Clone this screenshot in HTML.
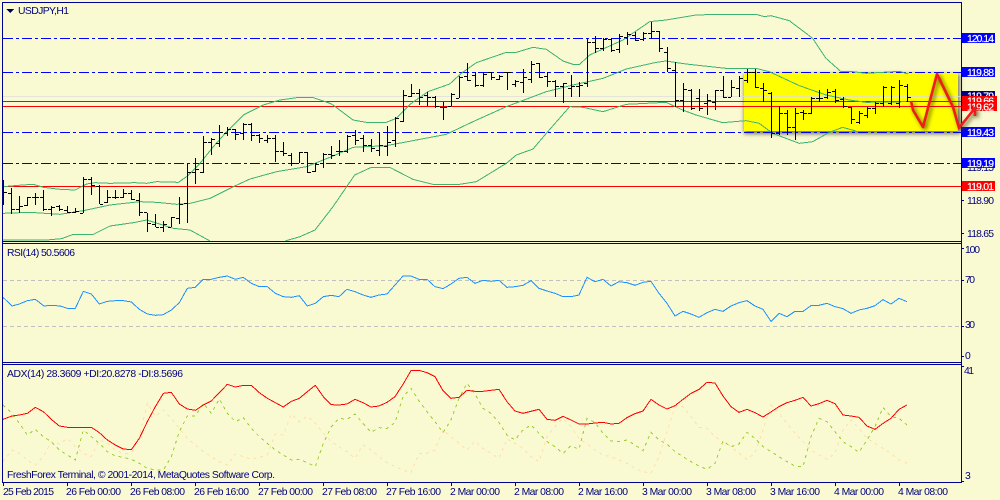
<!DOCTYPE html>
<html><head><meta charset="utf-8"><title>USDJPY,H1</title>
<style>
html,body{margin:0;padding:0;background:#fafad2;width:1000px;height:500px;overflow:hidden}
#y{position:absolute;left:744px;top:73px;width:214px;height:58px;background:#ffff00;box-shadow:1px 2px 4px 1px rgba(0,0,0,.5)}
svg{position:absolute;left:0;top:0}
text{font-family:"Liberation Sans",sans-serif;font-size:10.4px;fill:#000080}
.w{fill:#fff;stroke:#fff;stroke-width:.2px}
.l{fill:none;vector-effect:non-scaling-stroke;stroke-width:1}
</style></head><body>
<div id="y"></div>
<svg width="1000" height="500" viewBox="0 0 1000 500" shape-rendering="crispEdges">
<!-- level lines -->
<g fill="none">
<path d="M3 96.5H961" stroke="#dcdcdc" opacity=".75"/>
<path d="M3 38.5H961M3 72.5H961M3 132.5H961" stroke="#0000ff" stroke-dasharray="10 3 3 3"/>
<path d="M3 163.5H961" stroke="#0000c8" stroke-dasharray="10 3 3 3"/>
<path d="M3 101.5H961M3 106.5H961M3 186.5H961" stroke="#ff0000"/>
</g>
<!-- Bollinger -->
<g transform="scale(.33333)" fill="none" stroke="#3cb371">
<polyline class="l" points="9,560 68,555 100,553 130,562 180,568 225,570 260,552 285,548 330,550 405,548 440,550 470,545 535,547 560,530 600,490 640,440 680,395 730,345 790,315 840,300 890,293 940,293 990,310 999,315 1059,360 1099,367 1159,367 1189,355 1234,310 1284,275 1349,252 1384,220 1429,188 1519,157 1549,157 1599,142 1639,148 1689,183 1719,193 1739,193 1769,165 1869,120 1949,65 1998,60 2088,45 2158,43 2268,43 2293,50 2313,47 2368,62 2438,115 2478,175 2523,215 2558,215 2598,220 2698,214 2725,222"/>
<polyline class="l" points="9,640 90,637 180,643 250,632 330,615 420,605 470,607 530,613 570,610 630,595 700,560 750,537 830,515 920,500 999,468 1059,442 1159,437 1239,422 1339,403 1419,365 1519,320 1639,275 1719,255 1809,235 1879,207 1969,187 1998,183 2058,192 2178,205 2268,205 2308,215 2398,257 2478,285 2548,300 2598,307 2718,305"/>
<polyline class="l" points="9,720 140,720 185,716 220,703 280,703 330,678 400,668 440,660 520,685 570,690 630,723"/>
<polyline class="l" points="855,723 900,710 945,690 999,620 1064,525 1114,502 1169,502 1239,538 1299,553 1379,553 1429,545 1519,490 1549,465 1599,447 1639,400 1709,320 1749,322 1809,335 1879,313 1998,307 2048,330 2088,345 2168,368 2238,362 2278,370 2318,400 2398,430 2438,425 2488,397 2528,382 2568,393"/>
</g>
<!-- Price bars -->
<path fill="none" stroke="#000" d="M3.5 180V205M4 192.5h3
M11.5 188V214M8 193.5h3M12 209.5h3
M19.5 196V213M16 209.5h3M20 206.5h3
M27.5 197V206M24 205.5h3M28 197.5h3
M35.5 193V205M32 197.5h3M36 197.5h3
M43.5 190V211M40 197.5h3M44 209.5h3
M51.5 206V216M48 209.5h3M52 207.5h3
M59.5 205V211M56 206.5h3M60 209.5h3
M67.5 206V213M64 210.5h3M68 212.5h3
M75.5 208V213M72 212.5h3M76 211.5h3
M83.5 177V213M80 213.5h3M84 179.5h3
M91.5 177V195M88 179.5h3M92 185.5h3
M99.5 185V204M96 186.5h3M100 204.5h3
M107.5 190V203M104 202.5h3M108 197.5h3
M115.5 190V199M112 197.5h3M116 197.5h3
M123.5 189V198M120 197.5h3M124 193.5h3
M131.5 190V200M128 193.5h3M132 199.5h3
M139.5 193V216M136 200.5h3M140 212.5h3
M147.5 213V232M144 212.5h3M148 223.5h3
M155.5 214V227M152 224.5h3M156 227.5h3
M163.5 221V232M160 227.5h3M164 224.5h3
M171.5 217V227M168 227.5h3M172 217.5h3
M179.5 197V224M176 218.5h3M180 204.5h3
M187.5 164V223M184 203.5h3M188 172.5h3
M195.5 158V184M192 172.5h3M196 169.5h3
M203.5 136V173M200 172.5h3M204 142.5h3
M211.5 138V155M208 142.5h3M212 139.5h3
M219.5 125V147M216 143.5h3M220 132.5h3
M227.5 127V136M224 133.5h3M228 129.5h3
M235.5 129V140M232 129.5h3M236 134.5h3
M243.5 123V140M240 133.5h3M244 124.5h3
M251.5 123V141M248 124.5h3M252 135.5h3
M259.5 134V143M256 135.5h3M260 138.5h3
M267.5 135V143M264 140.5h3M268 138.5h3
M275.5 135V162M272 138.5h3M276 151.5h3
M283.5 142V156M280 151.5h3M284 153.5h3
M291.5 153V166M288 155.5h3M292 163.5h3
M299.5 152V163M296 163.5h3M300 152.5h3
M307.5 152V173M304 152.5h3M308 172.5h3
M315.5 163V172M312 171.5h3M316 164.5h3
M323.5 153V168M320 163.5h3M324 154.5h3
M331.5 146V159M328 154.5h3M332 155.5h3
M339.5 140V156M336 151.5h3M340 151.5h3
M347.5 135V153M344 151.5h3M348 136.5h3
M355.5 130V145M352 135.5h3M356 140.5h3
M363.5 135V152M360 138.5h3M364 145.5h3
M371.5 139V152M368 145.5h3M372 148.5h3
M379.5 132V156M376 150.5h3M380 145.5h3
M387.5 126V156M384 146.5h3M388 142.5h3
M395.5 117V147M392 140.5h3M396 118.5h3
M403.5 90V122M400 121.5h3M404 95.5h3
M411.5 84V97M408 96.5h3M412 93.5h3
M419.5 89V105M416 93.5h3M420 97.5h3
M427.5 92V106M424 95.5h3M428 97.5h3
M435.5 96V108M432 97.5h3M436 106.5h3
M443.5 102V120M440 107.5h3M444 107.5h3
M451.5 93V106M448 106.5h3M452 94.5h3
M459.5 76V98M456 98.5h3M460 77.5h3
M467.5 63V81M464 76.5h3M468 80.5h3
M475.5 72V87M472 75.5h3M476 85.5h3
M483.5 72V87M480 85.5h3M484 74.5h3
M491.5 72V80M488 72.5h3M492 77.5h3
M499.5 75V80M496 79.5h3M500 76.5h3
M507.5 72V90M504 72.5h3M508 72.5h3
M515.5 80V87M512 84.5h3M516 81.5h3
M523.5 69V93M520 82.5h3M524 77.5h3
M531.5 61V83M528 79.5h3M532 64.5h3
M539.5 63V78M536 63.5h3M540 77.5h3
M547.5 72V87M544 76.5h3M548 81.5h3
M555.5 80V97M552 81.5h3M556 86.5h3
M563.5 83V103M560 86.5h3M564 83.5h3
M571.5 75V97M568 88.5h3M572 86.5h3
M579.5 82V97M576 86.5h3M580 85.5h3
M587.5 38V87M584 83.5h3M588 42.5h3
M595.5 36V53M592 42.5h3M596 48.5h3
M603.5 38V51M600 48.5h3M604 39.5h3
M611.5 38V52M608 39.5h3M612 50.5h3
M619.5 34V53M616 49.5h3M620 36.5h3
M627.5 32V45M624 37.5h3M628 34.5h3
M635.5 32V41M632 35.5h3M636 40.5h3
M643.5 32V41M640 39.5h3M644 33.5h3
M651.5 22V39M648 33.5h3M652 31.5h3
M659.5 31V52M656 31.5h3M660 48.5h3
M667.5 47V72M664 52.5h3M668 68.5h3
M675.5 62V107M672 70.5h3M676 100.5h3
M683.5 83V112M680 100.5h3M684 89.5h3
M691.5 89V110M688 90.5h3M692 108.5h3
M699.5 89V111M696 98.5h3M700 108.5h3
M707.5 94V115M704 103.5h3M708 100.5h3
M715.5 90V110M712 102.5h3M716 90.5h3
M723.5 76V98M720 90.5h3M724 97.5h3
M731.5 80V97M728 97.5h3M732 87.5h3
M739.5 76V97M736 88.5h3M740 78.5h3
M747.5 69V83M744 80.5h3M748 72.5h3
M755.5 69V88M752 72.5h3M756 87.5h3
M763.5 83V102M760 88.5h3M764 90.5h3
M771.5 92V138M768 93.5h3M772 133.5h3
M779.5 106V135M776 133.5h3M780 113.5h3
M787.5 110V135M784 113.5h3M788 127.5h3
M795.5 108V140M792 127.5h3M796 113.5h3
M803.5 110V120M800 112.5h3M804 113.5h3
M811.5 97V114M808 113.5h3M812 98.5h3
M819.5 90V102M816 98.5h3M820 98.5h3
M827.5 89V99M824 97.5h3M828 92.5h3
M835.5 89V103M832 91.5h3M836 100.5h3
M843.5 97V108M840 99.5h3M844 106.5h3
M851.5 107V124M848 107.5h3M852 119.5h3
M859.5 111V124M856 122.5h3M860 113.5h3
M867.5 107V118M864 115.5h3M868 108.5h3
M875.5 102V114M872 108.5h3M876 103.5h3
M883.5 86V107M880 103.5h3M884 87.5h3
M891.5 86V105M888 103.5h3M892 87.5h3
M899.5 80V108M896 103.5h3M900 85.5h3
M907.5 84V102M904 86.5h3M908 97.5h3"/>
<!-- RSI -->
<path d="M3 280.5H961M3 326.5H961" stroke="#c0c0c0" stroke-dasharray="4 3" fill="none"/>
<g transform="translate(0,240) scale(.33333)" fill="none">
<polyline class="l" stroke="#1e90ff" points="9,172 36,198 58,192 82,182 106,178 132,198 154,196 180,198 202,205 226,205 250,154 274,162 298,192 322,184 346,182 370,182 394,186 418,208 442,222 466,226 490,224 514,210 538,188 562,145 586,142 610,118 634,118 658,112 682,108 706,118 730,112 754,130 778,140 802,140 826,160 850,170 874,172 898,167 922,198 946,190 970,170 994,166 1017,170 1041,148 1065,155 1089,165 1113,172 1137,165 1161,162 1185,135 1209,108 1233,108 1257,118 1281,118 1305,140 1329,146 1353,132 1377,115 1401,112 1425,130 1449,121 1473,124 1497,121 1521,142 1545,140 1569,136 1593,122 1617,145 1641,153 1665,160 1689,170 1713,170 1737,165 1761,112 1785,125 1809,118 1833,138 1857,125 1881,128 1905,136 1929,127 1953,124 1977,160 2001,190 2025,228 2049,214 2073,222 2097,232 2121,218 2145,208 2169,214 2193,198 2217,188 2241,182 2265,198 2289,208 2313,244 2337,220 2361,230 2385,214 2409,214 2433,197 2457,196 2481,190 2505,200 2529,206 2553,220 2577,210 2601,205 2625,197 2649,179 2673,192 2697,175 2721,185"/>
<!-- -DI -->
<polyline class="l" stroke="#ffdead" stroke-dasharray="3 4" points="9,665 36,630 58,640 82,660 106,675 130,650 154,605 178,612 202,595 226,620 250,640 274,650 298,600 322,610 346,630 370,640 394,640 418,590 442,490 466,530 490,510 514,535 538,565 562,595 586,615 610,635 634,650 658,665 682,675 706,642 730,650 754,658 778,652 802,645 826,582 850,585 874,522 898,545 922,528 946,550 970,580 994,605 1017,620 1041,635 1065,655 1089,615 1113,630 1137,650 1161,668 1185,680 1209,690 1233,698 1257,640 1281,640 1305,630 1329,570 1353,590 1377,610 1401,630 1425,603 1449,625 1473,640 1497,655 1521,597 1545,610 1569,625 1593,650 1617,665 1641,590 1665,560 1689,535 1713,560 1737,595 1761,612 1785,630 1809,645 1833,650 1857,660 1881,670 1905,685 1929,695 1953,700 1977,650 2001,575 2025,500 2049,500 2073,530 2097,562 2121,565 2145,590 2169,605 2193,620 2217,640 2241,658 2265,640 2289,570 2313,495 2337,520 2361,550 2385,580 2409,605 2433,630 2457,645 2481,658 2505,640 2529,570 2553,540 2577,565 2601,595 2625,610 2649,625 2673,640 2697,660 2721,670"/>
<!-- +DI -->
<polyline class="l" stroke="#9acd32" stroke-dasharray="3 4" points="9,495 36,520 58,550 82,585 106,568 130,590 154,605 178,630 202,645 226,660 250,570 274,590 298,610 322,635 346,648 370,652 394,658 418,670 442,685 466,690 490,690 514,650 538,575 562,528 586,528 610,490 634,520 658,477 682,520 706,545 730,533 754,565 778,590 802,610 826,630 850,645 874,660 898,658 922,668 946,680 970,610 994,560 1017,535 1041,538 1065,522 1089,550 1113,577 1137,563 1161,565 1185,548 1209,470 1233,445 1257,483 1281,515 1305,545 1329,578 1353,540 1377,475 1401,430 1425,462 1449,505 1473,520 1497,548 1521,585 1545,600 1569,570 1593,555 1617,580 1641,605 1665,620 1689,640 1713,617 1737,628 1761,535 1785,548 1809,580 1833,603 1857,605 1881,600 1905,615 1929,632 1953,577 1977,600 2001,612 2025,635 2049,650 2073,665 2097,678 2121,688 2145,670 2169,603 2193,620 2217,612 2241,577 2265,595 2289,620 2313,635 2337,650 2361,665 2385,678 2409,680 2433,590 2457,535 2481,545 2505,575 2529,605 2553,620 2577,637 2601,600 2625,560 2649,502 2673,530 2697,535 2721,555"/>
<!-- ADX -->
<polyline class="l" stroke="#ff0000" points="9,538 36,528 58,525 82,520 106,502 130,515 154,538 178,558 202,562 226,562 274,562 298,578 322,600 346,615 370,627 394,629 418,595 442,545 466,500 490,460 514,457 538,492 562,507 586,511 610,495 634,483 658,458 682,433 706,441 730,436 754,436 778,458 802,475 826,488 850,501 874,484 898,475 922,455 946,436 970,470 994,494 1017,495 1041,492 1065,478 1089,488 1113,501 1137,498 1161,487 1185,470 1209,433 1233,392 1257,391 1281,398 1305,410 1329,452 1353,475 1377,472 1401,451 1425,454 1449,454 1473,451 1497,448 1521,485 1545,513 1569,520 1593,514 1617,508 1641,538 1665,541 1689,529 1713,540 1737,552 1761,552 1785,549 1809,547 1833,552 1857,550 1881,533 1905,521 1929,513 1953,478 1977,495 2001,507 2025,497 2049,478 2073,460 2097,448 2121,427 2145,429 2169,468 2193,500 2217,517 2241,508 2265,518 2289,531 2313,516 2337,500 2361,488 2385,481 2409,472 2433,498 2457,491 2481,481 2505,491 2529,525 2553,528 2577,532 2601,558 2625,568 2649,550 2673,535 2697,508 2721,495"/>
</g>
<!-- frame -->
<path fill="none" stroke="#000090" d="M2.5 2.5H961.5V482.5H2.5ZM2.5 241.5H961.5M2.5 243.5H961.5M2.5 362.5H961.5M2.5 364.5H961.5
M961 38.5h3M961 72.5h3M961 96.5h3M961 132.5h3M961 163.5h3M961 200.5h3M961 233.5h3M961 248.5h3M961 280.5h3M961 326.5h3M961 356.5h3M961 366.5h3M961 481.5h3
M3.5 482V486M67.5 482V486M131.5 482V486M195.5 482V486M259.5 482V486M323.5 482V486M387.5 482V486M451.5 482V486M515.5 482V486M579.5 482V486M643.5 482V486M707.5 482V486M771.5 482V486M835.5 482V486M899.5 482V486"/>
<path d="M6 9h8l-4 4z" fill="#000050"/>
<!-- hidden axis text -->
<g shape-rendering="auto">
<text x="967" y="75" textLength="27">119.88</text>
<text x="967" y="136" textLength="27">119.40</text>
<text x="967" y="171" textLength="27">119.15</text>
<text x="967" y="204" textLength="27">118.90</text>
<text x="967" y="237" textLength="27">118.65</text>
<text x="965" y="253" textLength="15">100</text>
<text x="965" y="283" textLength="10">70</text>
<text x="965" y="328" textLength="10">30</text>
<text x="965" y="359">0</text>
<text x="964" y="374" textLength="10">41</text>
<text x="965" y="479">3</text>
<!-- price labels -->
<rect x="962" y="33" width="33" height="10" fill="#0000ff" shape-rendering="crispEdges"/><text class="w" x="967" y="41.8" textLength="27">120.14</text>
<rect x="962" y="67" width="33" height="10" fill="#0000ff" shape-rendering="crispEdges"/><text class="w" x="967" y="75.8" textLength="27">119.88</text>
<rect x="962" y="91" width="33" height="10" fill="#000080" shape-rendering="crispEdges"/><text class="w" x="967" y="99.5" textLength="27">119.79</text>
<rect x="962" y="96" width="35" height="10" fill="#ff0000" shape-rendering="crispEdges"/><text class="w" x="967" y="104.5" textLength="27">119.66</text>
<rect x="962" y="102" width="35" height="9" fill="#ff0000" shape-rendering="crispEdges"/><text class="w" x="967" y="110.3" textLength="27">119.62</text>
<rect x="962" y="127" width="33" height="10" fill="#0000ff" shape-rendering="crispEdges"/><text class="w" x="967" y="135.8" textLength="27">119.43</text>
<rect x="962" y="158" width="33" height="10" fill="#0000ff" shape-rendering="crispEdges"/><text class="w" x="967" y="166.8" textLength="27">119.19</text>
<rect x="962" y="181" width="33" height="10" fill="#ff0000" shape-rendering="crispEdges"/><text class="w" x="967" y="189.8" textLength="27">119.01</text>
<!-- titles -->
<text x="18" y="14" textLength="51">USDJPY,H1</text>
<text x="7" y="256" textLength="68">RSI(14) 50.5606</text>
<text x="7" y="377" textLength="176">ADX(14) 28.3609 +DI:20.8278 -DI:8.5696</text>
<text x="7" y="478" textLength="268">FreshForex Terminal, © 2001-2014, MetaQuotes Software Corp.</text>
<!-- time axis -->
<text x="3" y="495" textLength="51">25 Feb 2015</text>
<text x="66" y="495" textLength="55">26 Feb 00:00</text>
<text x="130" y="495" textLength="55">26 Feb 08:00</text>
<text x="194" y="495" textLength="55">26 Feb 16:00</text>
<text x="258" y="495" textLength="55">27 Feb 00:00</text>
<text x="322" y="495" textLength="55">27 Feb 08:00</text>
<text x="386" y="495" textLength="55">27 Feb 16:00</text>
<text x="450" y="495" textLength="50">2 Mar 00:00</text>
<text x="514" y="495" textLength="50">2 Mar 08:00</text>
<text x="578" y="495" textLength="50">2 Mar 16:00</text>
<text x="642" y="495" textLength="50">3 Mar 00:00</text>
<text x="706" y="495" textLength="50">3 Mar 08:00</text>
<text x="770" y="495" textLength="50">3 Mar 16:00</text>
<text x="834" y="495" textLength="50">4 Mar 00:00</text>
<text x="898" y="495" textLength="50">4 Mar 08:00</text>
<!-- drawn red W -->
<path d="M911 101L913 110L923 127L937 74L953 107L959 128L975 108V116" fill="none" stroke="#f01c1c" stroke-width="2.6" stroke-linejoin="round" style="filter:drop-shadow(2px 2px 2px rgba(60,60,0,.8))"/>
</g>
</svg>
</body></html>
